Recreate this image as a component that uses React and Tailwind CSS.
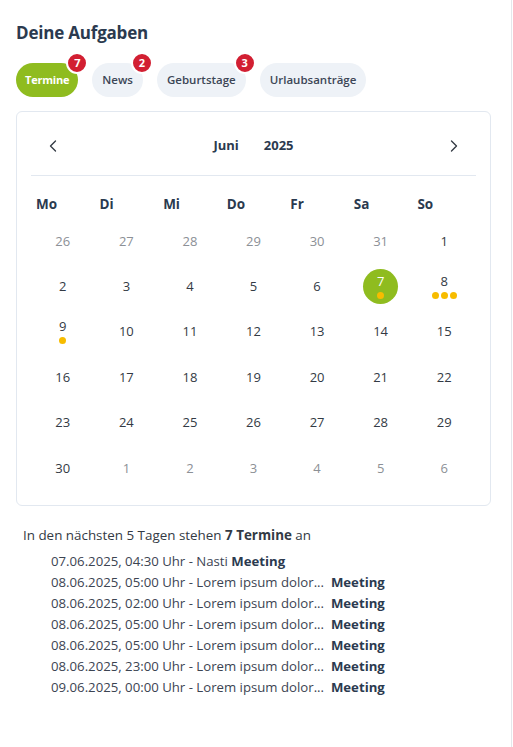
import React from "react";
import { ChevronLeft, ChevronRight } from "lucide-react";

const TABS = [
  { label: "Termine", badge: 7, active: true },
  { label: "News", badge: 2 },
  { label: "Geburtstage", badge: 3 },
  { label: "Urlaubsanträge" },
];

const WEEKDAYS = ["Mo", "Di", "Mi", "Do", "Fr", "Sa", "So"];

// [day, outside month, dots, selected]
const WEEKS = [
  [[26, 1], [27, 1], [28, 1], [29, 1], [30, 1], [31, 1], [1]],
  [[2], [3], [4], [5], [6], [7, 0, 1, true], [8, 0, 3]],
  [[9, 0, 1], [10], [11], [12], [13], [14], [15]],
  [[16], [17], [18], [19], [20], [21], [22]],
  [[23], [24], [25], [26], [27], [28], [29]],
  [[30], [1, 1], [2, 1], [3, 1], [4, 1], [5, 1], [6, 1]],
];

const EVENTS = [
  ["07.06.2025, 04:30 Uhr - Nasti", " "],
  ["08.06.2025, 05:00 Uhr - Lorem ipsum dolor...", "\u00a0 "],
  ["08.06.2025, 02:00 Uhr - Lorem ipsum dolor...", "\u00a0 "],
  ["08.06.2025, 05:00 Uhr - Lorem ipsum dolor...", "\u00a0 "],
  ["08.06.2025, 05:00 Uhr - Lorem ipsum dolor...", "\u00a0 "],
  ["08.06.2025, 23:00 Uhr - Lorem ipsum dolor...", "\u00a0 "],
  ["09.06.2025, 00:00 Uhr - Lorem ipsum dolor...", "\u00a0 "],
];

const DayCell = ({ day }) => {
  const [num, outside, dots = 0, selected] = day;
  return (
    <div className="h-[45.4px] flex items-center justify-center">
      <div
        className={`flex flex-col items-center justify-center ${
          selected ? "w-[35px] h-[35px] rounded-full bg-[#8fbc1f] text-white" : ""
        } ${outside ? "text-[#8c9096]" : selected ? "" : "text-[#333a44]"}`}
      >
        <span className="leading-[14px] text-[13px]">{num}</span>
        {dots > 0 && (
          <div className="flex gap-[2px] mt-[4px]">
            {Array.from({ length: dots }).map((_, i) => (
              <span key={i} className="w-[7px] h-[7px] rounded-full bg-[#f7bc00]" />
            ))}
          </div>
        )}
      </div>
    </div>
  );
};

const App = () => {
  return (
    <div
      className="w-[512px] min-h-[747px] bg-white border-r border-[#e5e7eb] text-[#2d3748]"
      style={{ fontFamily: '"Open Sans", "Noto Sans", sans-serif' }}
    >
      <div className="px-4 pt-[21px]">
        <h2 className="text-[17px] font-bold leading-6 text-[#2b3a4f] tracking-[-0.2px]">
          Deine Aufgaben
        </h2>

        {/* Tabs */}
        <div className="flex gap-[14px] mt-[18px]">
          {TABS.map((t) => (
            <div key={t.label} className="relative">
              <div
                className={`h-[34px] rounded-full flex items-center ${
                  t.active
                    ? "px-[9px] bg-[#8fbc1f] text-white font-bold text-[11px] tracking-[-0.2px]"
                    : "px-[10px] bg-[#eef2f7] text-[#3c4656] font-semibold text-[11.5px]"
                }`}
              >
                {t.label}
              </div>
              {t.badge && (
                <span className="absolute -top-[11px] -right-[10px] w-[22px] h-[22px] rounded-full bg-[#d21f32] border-2 border-white text-white text-[11px] font-bold flex items-center justify-center">
                  {t.badge}
                </span>
              )}
            </div>
          ))}
        </div>

        {/* Calendar */}
        <div className="mt-[14px] border border-[#e2e8f0] rounded-md px-[14px] pb-[15px] w-[475px]">
          <div className="flex items-center justify-between h-[64px] pt-[4px] px-[12px] border-b border-[#e2e8f0]">
            <ChevronLeft size={20} strokeWidth={1.6} className="text-[#333a44]" />
            <div className="flex gap-[25px] text-[13px] font-bold text-[#2b3a4f]">
              <span>Juni</span>
              <span>2025</span>
            </div>
            <ChevronRight size={20} strokeWidth={1.6} className="text-[#333a44]" />
          </div>
          <div className="grid grid-cols-7 mt-[18px]">
            {WEEKDAYS.map((w) => (
              <div key={w} className="pl-[5px] text-[13.5px] font-bold text-[#2b3a4f] h-[22px]">
                {w}
              </div>
            ))}
          </div>
          <div className="grid grid-cols-7 mt-[2px]">
            {WEEKS.flat().map((d, i) => (
              <DayCell key={i} day={d} />
            ))}
          </div>
        </div>

        {/* Upcoming */}
        <div className="px-[7px] pt-[19px] text-[#333a44]">
          <p className="leading-5 text-[13.4px]">
            In den nächsten 5 Tagen stehen <b>7 Termine</b> an
          </p>
          <ul className="pl-[28px] mt-[6px] text-[13.2px]">
            {EVENTS.map(([text, sep], i) => (
              <li key={i} className="leading-[21px] text-[#3c4452]">
                {text}
                {sep}
                <b className="text-[#2b3a4f]">Meeting</b>
              </li>
            ))}
          </ul>
        </div>
      </div>
    </div>
  );
};

export default App;
